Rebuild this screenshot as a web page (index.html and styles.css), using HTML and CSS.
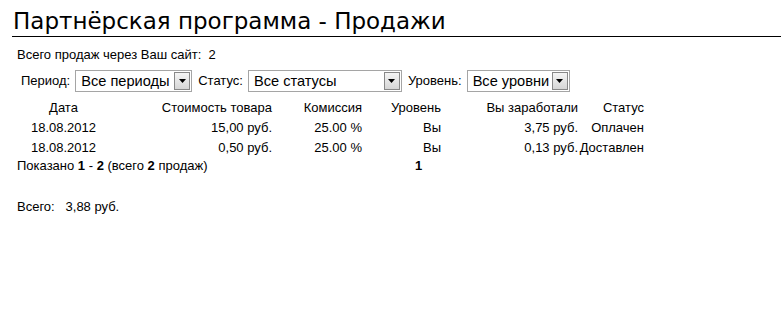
FILE: index.html
```html
<!DOCTYPE html>
<html>
<head>
    <title>Партнёрская программа - Продажи</title>
    <meta charset="UTF-8" name="viewport" content="width=device-width, initial-scale=1">
    <link rel="stylesheet" href="styles.css">
</head>

<body>
    <h1>Партнёрская программа - Продажи</h1>
    <p class="total-sales">Всего продаж через Ваш сайт:&nbsp; 2</p>
    <div class="filters">
        <label>Период:</label>
        <span class="sel sel-period">
            <span class="sel-text">Все периоды</span>
            <span class="sel-btn"><svg width="7" height="4" viewBox="0 0 7 4"><polygon points="0,0 7,0 3.5,4" fill="#000"/></svg></span>
        </span>
        <label>Статус:</label>
        <span class="sel sel-status">
            <span class="sel-text">Все статусы</span>
            <span class="sel-btn"><svg width="7" height="4" viewBox="0 0 7 4"><polygon points="0,0 7,0 3.5,4" fill="#000"/></svg></span>
        </span>
        <label>Уровень:</label>
        <span class="sel sel-level">
            <span class="sel-text">Все уровни</span>
            <span class="sel-btn"><svg width="7" height="4" viewBox="0 0 7 4"><polygon points="0,0 7,0 3.5,4" fill="#000"/></svg></span>
        </span>
    </div>
    <table class="sales">
        <tr>
            <th class="c-date">Дата</th>
            <th class="c-price">Стоимость товара</th>
            <th class="c-comm">Комиссия</th>
            <th class="c-level">Уровень</th>
            <th class="c-earn">Вы заработали</th>
            <th class="c-status">Статус</th>
        </tr>
        <tr>
            <td class="c-date">18.08.2012</td>
            <td class="c-price">15,00 руб.</td>
            <td class="c-comm">25.00 %</td>
            <td class="c-level">Вы</td>
            <td class="c-earn">3,75 руб.</td>
            <td class="c-status">Оплачен</td>
        </tr>
        <tr>
            <td class="c-date">18.08.2012</td>
            <td class="c-price">0,50 руб.</td>
            <td class="c-comm">25.00 %</td>
            <td class="c-level">Вы</td>
            <td class="c-earn">0,13 руб.</td>
            <td class="c-status">Доставлен</td>
        </tr>
    </table>
    <div class="pager">
        <span class="pager-info">Показано <b>1</b> - <b>2</b> (всего <b>2</b> продаж)</span>
        <span class="pager-pages"><b>1</b></span>
    </div>
    <p class="grand-total">Всего:&nbsp;&nbsp; 3,88 руб.</p>
</body>
</html>
```

FILE: styles.css
```css
body {
    margin: 0;
    font-family: "Liberation Sans", Arial, sans-serif;
    font-size: 13px;
    color: #000;
    background-color: #fff;
}

h1 {
    font-family: "DejaVu Sans", Verdana, sans-serif;
    font-weight: normal;
    font-size: 23px;
    line-height: 28px;
    margin: 7px 0 0 12px;
    padding: 0 0 1px 1px;
    border-bottom: 1px solid #000;
}

.total-sales {
    margin: 10px 0 0 17px;
    line-height: 15px;
}

.filters {
    display: flex;
    align-items: center;
    margin: 7px 0 0 21px;
    height: 23px;
}

.filters label {
    margin-right: 5px;
}

.sel {
    display: flex;
    align-items: center;
    height: 22px;
    border: 1px solid #a5a5a5;
    box-sizing: border-box;
    margin-right: 6px;
    padding: 1px;
    font-size: 14.6px;
    white-space: nowrap;
}

.sel-text {
    flex: 1;
    padding-left: 4px;
    line-height: 18px;
    overflow: hidden;
}

.sel-btn {
    display: flex;
    align-items: center;
    justify-content: center;
    width: 16px;
    height: 18px;
    box-sizing: border-box;
    border: 1px solid #888;
    background: linear-gradient(#f4f4f4, #d6d6d6);
}

.sel-period { width: 117px; }
.sel-status { width: 154px; }
.sel-level { width: 103px; }

.sales {
    border-collapse: collapse;
    margin: 5px 0 0 17px;
}

.sales th,
.sales td {
    font-weight: normal;
    padding: 0;
    height: 20px;
    text-align: right;
    white-space: nowrap;
}

.sales .c-date { width: 93px; text-align: center; }
.sales .c-price { width: 162px; }
.sales .c-comm { width: 90px; }
.sales .c-level { width: 79px; }
.sales .c-earn { width: 137px; }
.sales .c-status { width: 66px; }

.pager {
    display: flex;
    margin: 1px 0 0 17px;
    line-height: 15px;
}

.pager-info {
    width: 398px;
}

.grand-total {
    margin: 26px 0 0 17px;
    line-height: 15px;
}
```
